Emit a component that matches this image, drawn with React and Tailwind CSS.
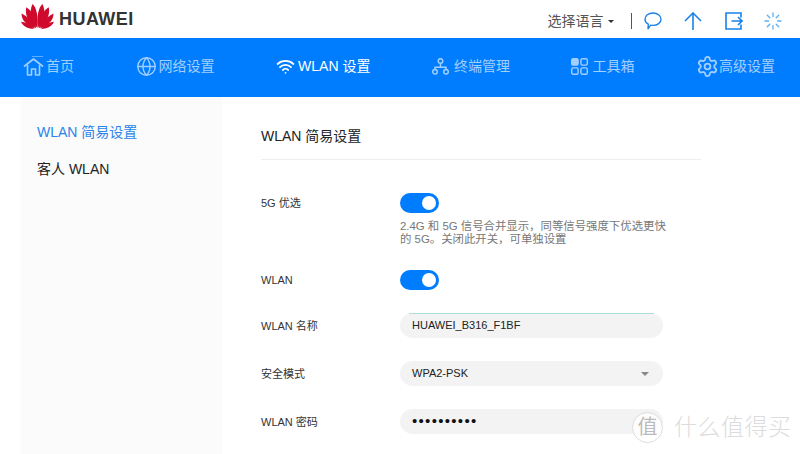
import { Globe, Settings, Wifi } from "lucide-react";

const font = "font-['Liberation_Sans','Noto_Sans_CJK_SC',sans-serif]";

function Logo() {
  // left half of the petals, mirrored for the right half
  const half = (
    <>
      <path d="M16.2 24 C10.5 17 7.5 8.5 11.5 0 C15.5 3 17.5 13 16.2 24 Z" />
      <path d="M15 24.2 C8.5 19.5 3.5 12 5.2 3.2 C10 5.5 15 14 15 24.2 Z" />
      <path d="M13.8 24.4 C7 22 0.5 17 0.5 9.5 C5 11.5 12.2 17.5 13.8 24.4 Z" />
      <path d="M12.8 25 C8 25 2 23 0 17.8 C4.5 18 10 21 12.8 25 Z" />
    </>
  );
  return (
    <svg width="33" height="25" viewBox="0 0 33 25" fill="#cf0a2c" className="shrink-0">
      <g>{half}</g>
      <g transform="translate(33 0) scale(-1 1)">{half}</g>
    </svg>
  );
}

function HomeIcon() {
  return (
    <svg width="21" height="20" viewBox="0 0 21 20" fill="none" stroke="currentColor" strokeWidth="1.6" strokeLinejoin="round">
      <path d="M9 0.5 H20" strokeWidth="0.6" />
      <path d="M1 10.5 L10.5 3 L20 10.5" />
      <path d="M4.5 9 V19 H8.5 V13 H12.5 V19 H16.5 V9" />
    </svg>
  );
}

function TerminalIcon() {
  return (
    <svg width="17" height="17" viewBox="0 0 17 17" fill="none" stroke="currentColor" strokeWidth="1.5">
      <circle cx="8.5" cy="3" r="2.3" />
      <circle cx="3" cy="13.7" r="2.3" />
      <circle cx="14" cy="13.7" r="2.3" />
      <path d="M8.5 5.3 V9.2 M3 11.4 V9.2 H14 V11.4" />
    </svg>
  );
}

function ToolsIcon() {
  return (
    <svg width="17" height="17" viewBox="0 0 17 17" fill="none" stroke="currentColor" strokeWidth="1.4">
      <rect x="0.7" y="0.7" width="6.4" height="6.4" rx="1.5" fill="currentColor" />
      <rect x="9.9" y="0.7" width="6.4" height="6.4" rx="1.5" />
      <rect x="0.7" y="9.9" width="6.4" height="6.4" rx="1.5" />
      <rect x="9.9" y="9.9" width="6.4" height="6.4" rx="1.5" />
    </svg>
  );
}

function ChatIcon() {
  return (
    <svg width="18" height="18" viewBox="0 0 18 18" fill="none" stroke="#1a82e8" strokeWidth="1.4" strokeLinejoin="round">
      <path d="M9 1 C13.5 1 17 3.6 17 7.2 C17 10.8 13.5 13.4 9 13.4 C8.2 13.4 7.4 13.3 6.7 13.2 L4 16.8 L4.3 12.2 C2.3 11.1 1 9.3 1 7.2 C1 3.6 4.5 1 9 1 Z" />
    </svg>
  );
}

function UpIcon() {
  return (
    <svg width="18" height="18" viewBox="0 0 18 18" fill="none" stroke="#1a82e8" strokeWidth="1.6">
      <path d="M9 1 V18 M1 9 L9 1 L17 9" />
    </svg>
  );
}

function ExitIcon() {
  return (
    <svg width="18" height="18" viewBox="0 0 18 18" fill="none" stroke="#1a82e8" strokeWidth="1.6">
      <path d="M16 5.5 V1 H1 V17 H16 V12.5" />
      <path d="M6.5 9 H17 M13 5 L17 9 L13 13" />
    </svg>
  );
}

function Spinner() {
  return (
    <svg width="18" height="18" viewBox="0 0 18 18" stroke="#5aaef2" strokeWidth="1.3" strokeLinecap="round">
      <path d="M9 1 V4.5 M9 13.5 V17 M1 9 H4.5 M13.5 9 H17 M3.3 3.3 L5.8 5.8 M12.2 12.2 L14.7 14.7 M14.7 3.3 L12.2 5.8 M5.8 12.2 L3.3 14.7" />
    </svg>
  );
}

function NavItem({ icon, label, active, gap }) {
  return (
    <div className={`flex items-center text-sm ${gap} ${active ? "text-white" : "text-[#a3cfff]"}`}>
      {icon}
      <span>{label}</span>
    </div>
  );
}

function Toggle() {
  return (
    <div className="flex h-5 w-[39px] items-center justify-end rounded-full bg-[#007dff] pr-[3px]">
      <div className="h-[14px] w-[14px] rounded-full bg-white" />
    </div>
  );
}

function Row({ label, children, className }) {
  return (
    <div className={`flex items-center ${className}`}>
      <div className="w-[139px] pt-px text-[11px] text-[#333]">{label}</div>
      {children}
    </div>
  );
}

function Field({ children }) {
  return (
    <div className="flex h-[25px] w-[263px] items-center justify-between rounded-full bg-[#f3f3f3] px-3 text-[11px] text-[#222]">
      {children}
    </div>
  );
}

export default function App() {
  return (
    <div className={`relative h-[454px] w-[800px] overflow-hidden bg-white ${font}`}>
      <header className="flex h-[38px] items-start justify-between pl-[21px] pr-[18px]">
        <div className="flex items-start gap-[5px] pt-[4px]">
          <Logo />
          <span className="mt-[5px] text-[18px] leading-[20px] font-bold tracking-[0.45px] text-[#333]">HUAWEI</span>
        </div>
        <div className="flex items-center pt-[12px]">
          <span className="text-sm leading-[18px] text-[#555]">选择语言</span>
          <span className="ml-1 h-0 w-0 border-x-[3px] border-t-[3px] border-x-transparent border-t-[#333]" />
          <span className="ml-[17px] h-[16px] w-[1.5px] bg-[#555]" />
          <div className="ml-3"><ChatIcon /></div>
          <div className="ml-[22px]"><UpIcon /></div>
          <div className="ml-[23px]"><ExitIcon /></div>
          <div className="ml-[21px]"><Spinner /></div>
        </div>
      </header>

      <nav className="flex h-[59px] items-center justify-between bg-[#007dff] pb-[3px] pl-[23px] pr-[25px]">
        <NavItem icon={<HomeIcon />} label="首页" gap="gap-[2px]" />
        <NavItem icon={<Globe size={21} strokeWidth={1.6} />} label="网络设置" gap="gap-[2px]" />
        <NavItem icon={<Wifi size={19} strokeWidth={2.2} />} label="WLAN 设置" gap="gap-[3px]" active />
        <NavItem icon={<TerminalIcon />} label="终端管理" gap="gap-[5px]" />
        <NavItem icon={<ToolsIcon />} label="工具箱" gap="gap-1" />
        <NavItem icon={<Settings size={23} strokeWidth={1.9} />} label="高级设置" gap="gap-0" />
      </nav>

      <div className="flex pl-[21px]">
        <aside className="h-[357px] w-[201px] bg-[#fbfbfb] px-4 pt-[25px] text-sm">
          <div className="text-[#2b84ea]">WLAN 简易设置</div>
          <div className="mt-[17px] text-[#222]">客人 WLAN</div>
        </aside>

        <main className="ml-[39px] w-[440px]">
          <h1 className="mt-[30px] text-sm leading-[18px] font-normal text-[#222]">WLAN 简易设置</h1>
          <div className="mt-[14px] h-px bg-[#eeeeee]" />

          <Row label="5G 优选" className="mt-[33px]">
            <Toggle />
          </Row>
          <p className="mt-[7px] ml-[139px] w-[268px] text-[11.4px] leading-[13px] text-[#777]">
            2.4G 和 5G 信号合并显示，同等信号强度下优选更快的 5G。关闭此开关，可单独设置
          </p>

          <Row label="WLAN" className="mt-[24px]">
            <Toggle />
          </Row>

          <Row label="WLAN 名称" className="relative mt-[23px]">
            <div className="absolute top-0 left-[148px] h-px w-[245px] bg-[#a9e0dc]" />
            <Field>HUAWEI_B316_F1BF</Field>
          </Row>

          <Row label="安全模式" className="mt-[23px]">
            <Field>
              WPA2-PSK
              <span className="mr-[2px] h-0 w-0 border-x-[4px] border-t-[4px] border-x-transparent border-t-[#888]" />
            </Field>
          </Row>

          <Row label="WLAN 密码" className="mt-[23px]">
            <Field>
              <span className="text-[15px] tracking-[1.3px] text-[#111]">••••••••••</span>
            </Field>
          </Row>
        </main>
      </div>

      {/* site watermark */}
      <div className="absolute top-[410px] left-[632px] flex items-center gap-[11px] text-[#dcdcdc]">
        <div className="flex h-[31px] w-[31px] items-center justify-center rounded-full border border-[#ddd] bg-white/80 text-[20px] text-[#bbb]">值</div>
        <span className="text-[23px] font-light tracking-[0.5px]">什么值得买</span>
      </div>
    </div>
  );
}
